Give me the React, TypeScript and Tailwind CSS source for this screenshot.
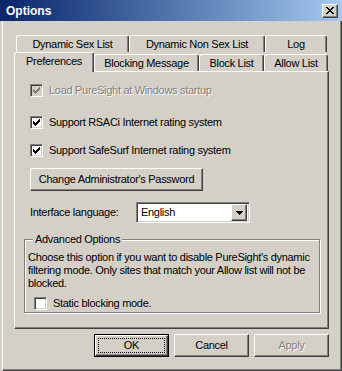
import React from "react";

const raised =
  "border border-t-white border-l-white border-r-[#404040] border-b-[#404040] shadow-[inset_-1px_-1px_#808080]";
const sunken =
  "border border-t-[#808080] border-l-[#808080] border-r-white border-b-white shadow-[inset_1px_1px_#404040,inset_-1px_-1px_#d4d0c8]";

function CheckMark({ color }: { color: string }) {
  // classic 7x7 pixel tick
  const px = [
    [6, 0], [5, 1], [6, 1], [0, 2], [4, 2], [5, 2], [6, 2],
    [0, 3], [1, 3], [3, 3], [4, 3], [5, 3], [0, 4], [1, 4], [2, 4], [3, 4], [4, 4],
    [1, 5], [2, 5], [3, 5], [2, 6],
  ];
  return (
    <svg width="7" height="7" viewBox="0 0 7 7" shapeRendering="crispEdges">
      {px.map(([x, y], i) => (
        <rect key={i} x={x} y={y} width="1" height="1" fill={color} />
      ))}
    </svg>
  );
}

function Checkbox({ checked, disabled }: { checked?: boolean; disabled?: boolean }) {
  return (
    <div
      className={`w-[13px] h-[13px] shrink-0 flex items-center justify-center ${sunken} ${
        disabled ? "bg-[#d4d0c8]" : "bg-white"
      }`}
    >
      {checked && <CheckMark color={disabled ? "#808080" : "#000"} />}
    </div>
  );
}

function CheckRow({
  label,
  checked,
  disabled,
  className = "",
}: {
  label: string;
  checked?: boolean;
  disabled?: boolean;
  className?: string;
}) {
  return (
    <div className={`flex items-center gap-[6px] h-[13px] ${className}`}>
      <Checkbox checked={checked} disabled={disabled} />
      <span className={disabled ? "text-[#808080] [text-shadow:1px_1px_#fff]" : "text-black"}>{label}</span>
    </div>
  );
}

function Tab({ label, w, selected }: { label: string; w: string; selected?: boolean }) {
  return (
    <div
      className={`${w} ${
        selected ? "h-[20px] -mb-px relative z-10 pb-[2px]" : "h-[17px] pt-[1px]"
      } shrink-0 bg-[#d4d0c8] border-l border-t border-white border-r border-r-[#404040] shadow-[inset_-1px_0_#808080] rounded-t-[3px] flex items-center justify-center`}
    >
      {label}
    </div>
  );
}

function Button({ label, isDefault, disabled }: { label: string; isDefault?: boolean; disabled?: boolean }) {
  if (isDefault) {
    return (
      <div className="w-[75px] h-[23px] border border-black">
        <div className={`w-full h-full ${raised} p-[2px]`}>
          <div className="w-full h-full border border-dotted border-black flex items-center justify-center">
            {label}
          </div>
        </div>
      </div>
    );
  }
  return (
    <div
      className={`w-[75px] h-[23px] ${raised} flex items-center justify-center ${
        disabled ? "text-[#808080] [text-shadow:1px_1px_#fff]" : ""
      }`}
    >
      {label}
    </div>
  );
}

export default function App() {
  return (
    <div className="w-[342px] h-[371px] bg-[#d4d0c8] flex flex-col font-['Liberation_Sans',Arial,sans-serif] text-[11px] tracking-[-0.3px] text-black leading-none">
      {/* title bar */}
      <div className="h-[21px] shrink-0 bg-gradient-to-r from-[#0a246a] to-[#a6caf0] flex items-center justify-between pl-[6px] pr-[4px]">
        <span className="text-white font-bold text-[12px] tracking-normal">Options</span>
        <div className={`w-[16px] h-[14px] bg-[#d4d0c8] ${raised} flex items-center justify-center`}>
          <svg width="8" height="7" viewBox="0 0 8 7" shapeRendering="crispEdges">
            <path d="M0 0h2v1h-2zM6 0h2v1h-2zM1 1h2v1h-2zM5 1h2v1h-2zM2 2h4v1h-4zM3 3h2v1h-2zM2 4h4v1h-4zM1 5h2v1h-2zM5 5h2v1h-2zM0 6h2v1h-2zM6 6h2v1h-2z" fill="#000" />
          </svg>
        </div>
      </div>

      {/* body */}
      <div className="flex-1 flex flex-col ml-[2px] pl-[11px] pt-[14px] border-l border-l-white border-r border-b border-r-[#404040] border-b-[#404040] shadow-[inset_-1px_-1px_#808080]">
        {/* tabs */}
        <div className="flex ml-[2px]">
          <Tab label="Dynamic Sex List" w="w-[113px]" />
          <Tab label="Dynamic Non Sex List" w="w-[136px]" />
          <Tab label="Log" w="w-[62px]" />
        </div>
        <div className="flex items-end h-[19px]">
          <Tab label="Preferences" w="w-[80px]" selected />
          <Tab label="Blocking Message" w="w-[105px]" />
          <Tab label="Block List" w="w-[65px]" />
          <Tab label="Allow List" w="w-[64px]" />
        </div>

        {/* panel */}
        <div className="w-[315px] h-[258px] shrink-0 border-l border-t border-white border-r border-b border-r-[#404040] border-b-[#404040] shadow-[inset_-1px_-1px_#808080] pl-[15px] pt-[12px] flex flex-col">
          <CheckRow label="Load PureSight at Windows startup" checked disabled />
          <CheckRow label="Support RSACi Internet rating system" checked className="mt-[19px]" />
          <CheckRow label="Support SafeSurf Internet rating system" checked className="mt-[15px]" />

          <div className={`mt-[11px] w-[173px] h-[23px] ${raised} flex items-center justify-center`}>
            Change Administrator's Password
          </div>

          <div className="mt-[11px] flex items-center h-[21px]">
            <span className="w-[106px]">Interface language:</span>
            <div className={`w-[114px] h-[21px] bg-white ${sunken} flex items-center pl-[4px] pr-[2px]`}>
              <span className="flex-1">English</span>
              <div className={`w-[16px] h-[17px] bg-[#d4d0c8] ${raised} flex items-center justify-center`}>
                <svg width="7" height="4" viewBox="0 0 7 4" shapeRendering="crispEdges">
                  <path d="M0 0h7v1h-7zM1 1h5v1h-5zM2 2h3v1h-3zM3 3h1v1h-1z" fill="#000" />
                </svg>
              </div>
            </div>
          </div>

          {/* group box */}
          <div className="mt-[16px] -ml-[6px] w-[296px] h-[74px] border border-[#808080] shadow-[inset_1px_1px_#fff,1px_1px_#fff] flex flex-col px-[3px]">
            <span className="-mt-[6px] ml-[5px] px-[2px] w-fit bg-[#d4d0c8]">Advanced Options</span>
            <p className="mt-[6px] leading-[13px]">
              Choose this option if you want to disable PureSight's dynamic filtering mode. Only sites that match
              your Allow list will not be blocked.
            </p>
            <CheckRow label="Static blocking mode." className="mt-[7px] ml-[6px]" />
          </div>
        </div>

        {/* dialog buttons */}
        <div className="w-[315px] flex justify-end gap-[5px] mt-[5px]">
          <Button label="OK" isDefault />
          <Button label="Cancel" />
          <Button label="Apply" disabled />
        </div>
      </div>
    </div>
  );
}
